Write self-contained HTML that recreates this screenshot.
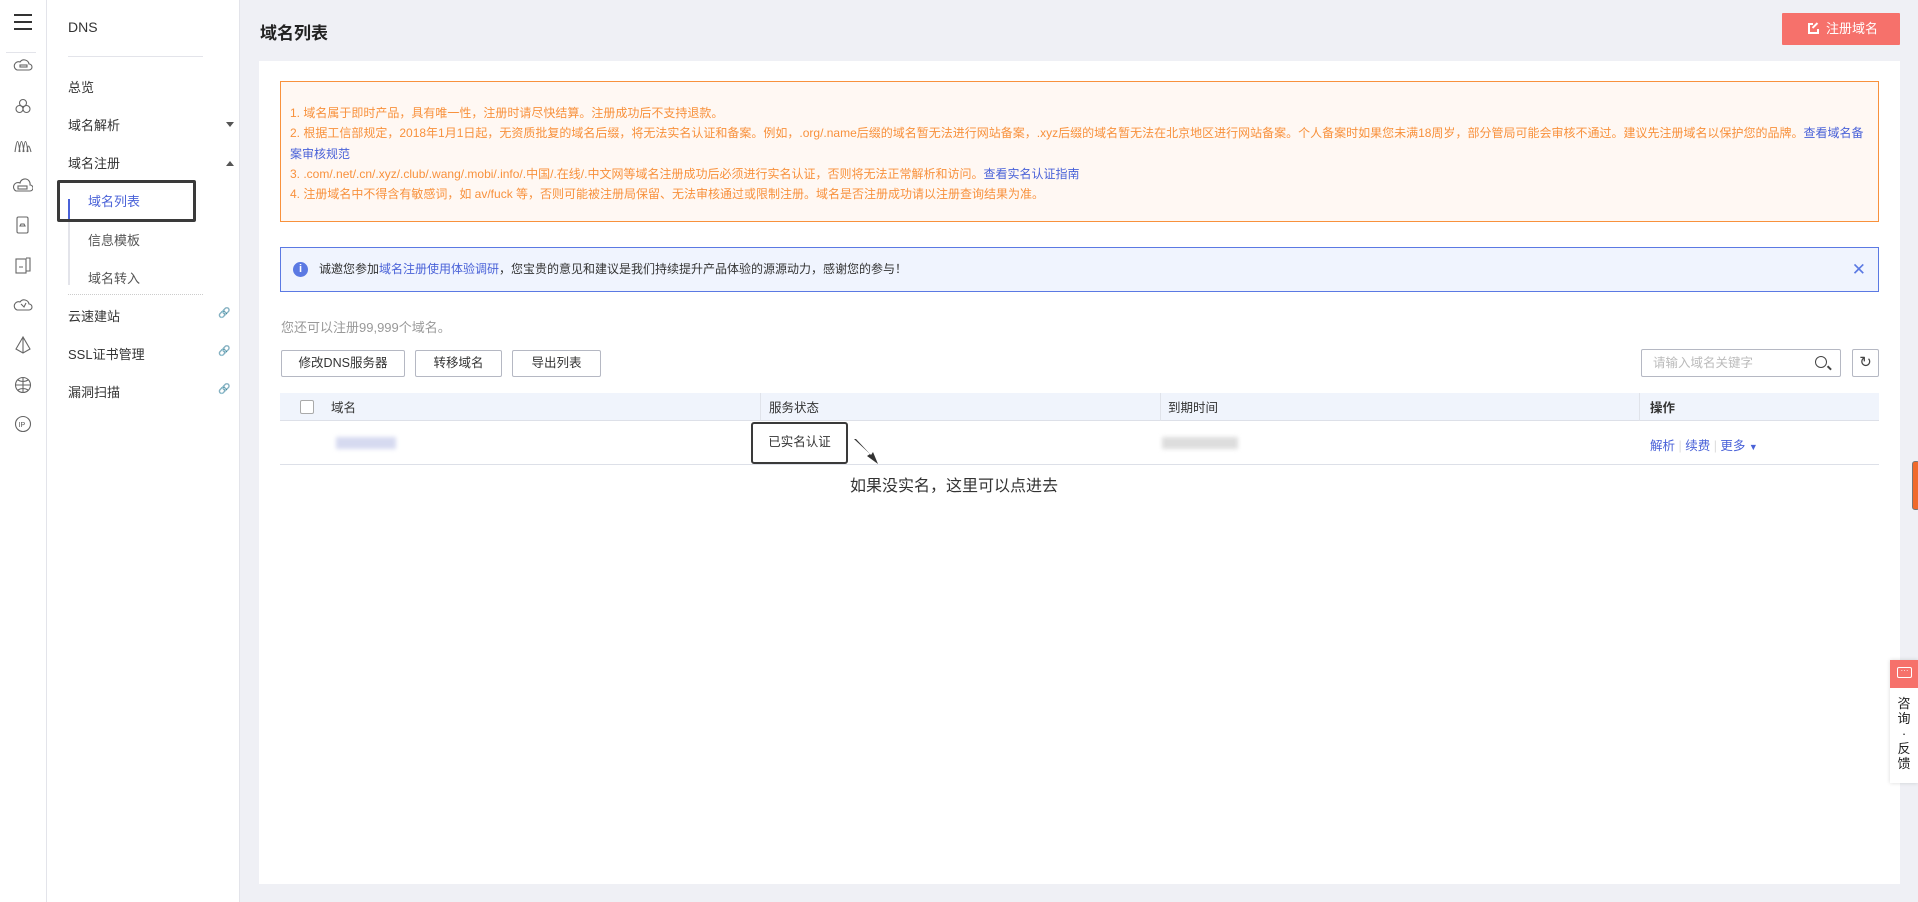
<!DOCTYPE html>
<html><head><meta charset="utf-8"><style>
*{box-sizing:border-box;margin:0;padding:0}
body{width:1918px;height:902px;overflow:hidden;background:#eff0f5;font-family:"Liberation Sans","Noto Sans CJK SC",sans-serif;font-size:13px;color:#333;position:relative}
.abs{position:absolute}
#ib{left:0;top:0;width:47px;height:902px;background:#fff;border-right:1px solid #e3e4ea}
#sb{left:47px;top:0;width:193px;height:902px;background:#fff;border-right:1px solid #e3e4ea}
.si{position:absolute;left:21px;font-size:13px;color:#333}
.sub{left:41px;color:#555}
.ic{position:absolute;left:13px;width:20px;height:20px}
.ic svg{width:20px;height:20px;fill:none;stroke:#666;stroke-width:1.1}
#panel{left:259px;top:61px;width:1641px;height:823px;background:#fff}
.warn{left:280px;top:81px;width:1599px;height:141px;background:#fff8f3;border:1px solid #f8913c;padding:21px 0 0 9px;color:#f8913c;font-size:12px;line-height:20.3px}
.warn a,.info a{color:#4a62d8;text-decoration:none}
.info{left:280px;top:247px;width:1599px;height:45px;background:#f0f4fe;border:1px solid #5b79e3;font-size:12px;line-height:43px;padding-left:38px;color:#333}
.btn{position:absolute;top:350px;height:27px;border:1px solid #b5b8c3;background:#fff;font-size:12.5px;line-height:25px;text-align:center;color:#333;border-radius:2px}
.th{left:280px;top:393px;width:1599px;height:28px;background:#f0f4fc;border-bottom:1px solid #dde0e8}
.th span{position:absolute;top:4px;font-size:12.5px;color:#333}
.sep{position:absolute;top:0;width:1px;height:28px;background:#e0e3ea}
.blur{position:absolute;background:#d6daf0;filter:blur(2px)}
</style></head><body>
<div id="ib" class="abs">
 <div class="abs" style="left:14px;top:14px;width:18px;height:2px;background:#333"></div>
 <div class="abs" style="left:14px;top:21px;width:18px;height:2px;background:#333"></div>
 <div class="abs" style="left:14px;top:28px;width:18px;height:2px;background:#333"></div>
 <div class="abs" style="left:6px;top:52px;width:30px;height:1px;background:#e3e4ea"></div>
 <div class="ic" style="top:55px"><svg viewBox="0 0 20 20"><path d="M4 15h12a3 3 0 0 0 0-6 5 5 0 0 0-9-2 4 4 0 0 0-3 8z"/><rect x="7" y="10" width="7" height="2"/></svg></div>
 <div class="ic" style="top:96px"><svg viewBox="0 0 20 20"><circle cx="10" cy="7" r="3.5"/><circle cx="6.5" cy="13" r="3.5"/><circle cx="13.5" cy="13" r="3.5"/></svg></div>
 <div class="ic" style="top:136px"><svg viewBox="0 0 20 20"><path d="M2 16C4 2 5 2 7 16M6 16C8 2 9 2 11 16M10 16C12 2 13 2 15 16M14 16c1-8 2-8 4 0"/></svg></div>
 <div class="ic" style="top:176px"><svg viewBox="0 0 20 20"><path d="M3 15h14a3 3 0 0 0 0-6 5 5 0 0 0-10-2 4 4 0 0 0-4 8z"/><rect x="5" y="10" width="9" height="3"/></svg></div>
 <div class="ic" style="top:215px"><svg viewBox="0 0 20 20"><rect x="4" y="2" width="11" height="16" rx="1.5"/><path d="M7 11h5l-1-2h-3z"/></svg></div>
 <div class="ic" style="top:255px"><svg viewBox="0 0 20 20"><rect x="3" y="4" width="10" height="14"/><path d="M13 3h4v13h-4M6 12h4"/></svg></div>
 <div class="ic" style="top:295px"><svg viewBox="0 0 20 20"><path d="M4 15h12a3 3 0 0 0 0-6 5 5 0 0 0-9-2 4 4 0 0 0-3 8zM8 9l3 3 2-4"/></svg></div>
 <div class="ic" style="top:335px"><svg viewBox="0 0 20 20"><path d="M10 2L3 14l7 4 7-4zM10 2v16"/></svg></div>
 <div class="ic" style="top:375px"><svg viewBox="0 0 20 20"><circle cx="10" cy="10" r="7.5"/><path d="M2.5 10h15M10 2.5v15M5 5c3 2 7 2 10 0M5 15c3-2 7-2 10 0"/></svg></div>
 <div class="ic" style="top:414px"><svg viewBox="0 0 20 20"><circle cx="10" cy="10" r="7.5"/><text x="5.5" y="13" font-size="7" fill="#555" stroke="none" font-family="Liberation Sans">IP</text></svg></div>
</div>
<div id="sb" class="abs">
 <div class="si" style="top:19px;font-size:14px">DNS</div>
 <div class="abs" style="left:21px;top:56px;width:135px;height:1px;background:#e3e4ea"></div>
 <div class="si" style="top:77px">总览</div>
 <div class="si" style="top:115px">域名解析</div>
 <div class="abs" style="left:179px;top:122px;border:4px solid transparent;border-top:5px solid #555"></div>
 <div class="si" style="top:153px">域名注册</div>
 <div class="abs" style="left:179px;top:157px;border:4px solid transparent;border-bottom:5px solid #555"></div>
 <div class="abs" style="left:21px;top:199px;width:2px;height:86px;background:#e3e4ea"></div>
 <div class="abs" style="left:21px;top:199px;width:2px;height:22px;background:#4a62d8"></div>
 <div class="si sub" style="top:191px;color:#4a62d8">域名列表</div>
 <div class="si sub" style="top:230px">信息模板</div>
 <div class="si sub" style="top:268px">域名转入</div>
 <div class="abs" style="left:10px;top:180px;width:139px;height:42px;border:3px solid #3a3a3a;border-radius:2px"></div>
 <div class="abs" style="left:21px;top:294px;width:135px;border-top:1px dotted #ccc"></div>
 <div class="si" style="top:306px">云速建站</div>
 <div class="si" style="top:344px">SSL证书管理</div>
 <div class="si" style="top:382px">漏洞扫描</div>
 <div class="abs" style="left:171px;top:308px;font-size:10px;color:#777">&#x1F517;</div>
 <div class="abs" style="left:171px;top:346px;font-size:10px;color:#777">&#x1F517;</div>
 <div class="abs" style="left:171px;top:384px;font-size:10px;color:#777">&#x1F517;</div>
</div>
<div class="abs" style="left:260px;top:19px;font-size:17px;font-weight:bold;color:#222">域名列表</div>
<div class="abs" style="left:1782px;top:13px;width:118px;height:32px;background:#f6716b;color:#fff;font-size:13px;line-height:32px;padding-left:44px;border-radius:1px">注册域名
 <div class="abs" style="left:26px;top:10px;width:11px;height:11px;border:2px solid #fff;border-top-color:transparent;border-right-color:transparent"></div>
 <div class="abs" style="left:26px;top:10px;width:5px;height:2px;background:#fff"></div>
 <div class="abs" style="left:35px;top:16px;width:2px;height:5px;background:#fff"></div>
 <div class="abs" style="left:32px;top:9px;width:2px;height:7px;background:#fff;transform:rotate(45deg)"></div>
</div>
<div id="panel" class="abs"></div>
<div class="abs warn">
1. 域名属于即时产品，具有唯一性，注册时请尽快结算。注册成功后不支持退款。<br>
2. 根据工信部规定，2018年1月1日起，无资质批复的域名后缀，将无法实名认证和备案。例如，.org/.name后缀的域名暂无法进行网站备案，.xyz后缀的域名暂无法在北京地区进行网站备案。个人备案时如果您未满18周岁，部分管局可能会审核不通过。建议先注册域名以保护您的品牌。<a>查看域名备<br>案审核规范</a><br>
3. .com/.net/.cn/.xyz/.club/.wang/.mobi/.info/.中国/.在线/.中文网等域名注册成功后必须进行实名认证，否则将无法正常解析和访问。<a>查看实名认证指南</a><br>
4. 注册域名中不得含有敏感词，如 av/fuck 等，否则可能被注册局保留、无法审核通过或限制注册。域名是否注册成功请以注册查询结果为准。
</div>
<div class="abs info">诚邀您参加<a>域名注册使用体验调研</a>，您宝贵的意见和建议是我们持续提升产品体验的源源动力，感谢您的参与！
 <div class="abs" style="left:12px;top:14px;width:15px;height:15px;border-radius:50%;background:#5b79e3;color:#fff;font-size:11px;font-weight:bold;line-height:15px;text-align:center">i</div>
 <div class="abs" style="right:12px;top:0;color:#5b79e3;font-size:17px">✕</div>
</div>
<div class="abs" style="left:281px;top:317px;font-size:13px;color:#999">您还可以注册99,999个域名。</div>
<div class="btn" style="left:281px;width:124px">修改DNS服务器</div>
<div class="btn" style="left:415px;width:87px">转移域名</div>
<div class="btn" style="left:512px;width:89px">导出列表</div>
<div class="abs" style="left:1641px;top:349px;width:200px;height:28px;border:1px solid #b5b8c3;border-radius:2px;font-size:12.5px;color:#bbb;line-height:26px;padding-left:11px">请输入域名关键字
 <div class="abs" style="left:173px;top:6px;width:12px;height:12px;border:1.5px solid #444;border-radius:50%"></div>
 <div class="abs" style="left:185px;top:17px;width:5px;height:1.5px;background:#444;transform:rotate(45deg)"></div>
</div>
<div class="abs" style="left:1852px;top:349px;width:27px;height:28px;border:1px solid #b5b8c3;border-radius:2px;text-align:center;line-height:26px;font-size:15px;color:#444">↻</div>
<div class="abs th">
 <div class="abs" style="left:20px;top:7px;width:14px;height:14px;border:1px solid #aaa;background:#fff;border-radius:2px"></div>
 <span style="left:51px">域名</span>
 <div class="sep" style="left:480px"></div><span style="left:489px">服务状态</span>
 <div class="sep" style="left:880px"></div><span style="left:888px">到期时间</span>
 <div class="sep" style="left:1359px"></div><span style="left:1370px;font-weight:bold">操作</span>
</div>
<div class="abs" style="left:280px;top:464px;width:1599px;height:1px;background:#dde0e8"></div>
<div class="blur" style="left:336px;top:437px;width:60px;height:12px"></div>
<div class="blur" style="left:1162px;top:437px;width:76px;height:12px;background:#ddd"></div>
<div class="abs" style="left:751px;top:422px;width:97px;height:42px;border:2.5px solid #3a3a3a;border-radius:3px;font-size:12.5px;line-height:37px;text-align:center">已实名认证</div>
<svg class="abs" style="left:852px;top:438px" width="32" height="28"><path d="M2 1L18 16l-3 2 11 8-5-12-2 3L4 1z" fill="#333"/></svg>
<div class="abs" style="left:850px;top:472px;font-size:16px;color:#333">如果没实名，这里可以点进去</div>
<div class="abs" style="left:1650px;top:435px;font-size:12.5px;color:#4a62d8">解析 <span style="color:#ddd">|</span> 续费 <span style="color:#ddd">|</span> 更多 <span style="font-size:9px">▼</span></div>
<div class="abs" style="left:1912px;top:461px;width:8px;height:49px;border:1.5px solid #777;border-radius:3px;background:#f06a2b"></div>
<div class="abs" style="left:1890px;top:660px;width:28px;height:123px;background:#fff;box-shadow:0 0 4px rgba(0,0,0,.15)">
 <div style="height:28px;background:#f6716b;position:relative"><div class="abs" style="left:7px;top:7px;width:15px;height:11px;border:1.3px solid #fff;border-radius:2px;color:#fff;font-size:8px;line-height:5px;text-align:center">···</div></div>
 <div style="font-size:13px;line-height:15px;text-align:center;padding-top:8px;color:#222">咨<br>询<br>·<br>反<br>馈</div>
</div>
</body></html>
